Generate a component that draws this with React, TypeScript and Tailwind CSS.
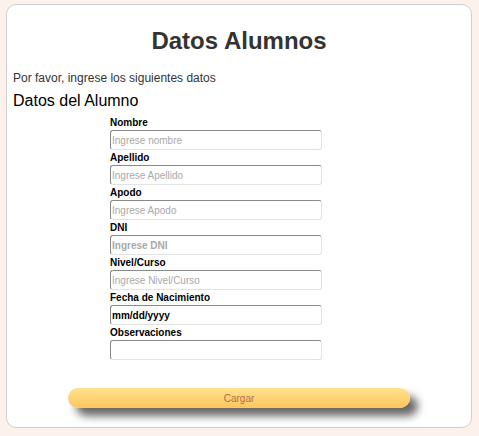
import React from "react";

const fields = [
  { label: "Nombre", placeholder: "Ingrese nombre" },
  { label: "Apellido", placeholder: "Ingrese Apellido" },
  { label: "Apodo", placeholder: "Ingrese Apodo" },
  { label: "DNI", placeholder: "Ingrese DNI", bold: true },
  { label: "Nivel/Curso", placeholder: "Ingrese Nivel/Curso" },
  { label: "Fecha de Nacimiento", value: "mm/dd/yyyy" },
  { label: "Observaciones", placeholder: "" },
];

export default function App() {
  return (
    <div
      className="min-h-[436px] bg-[#fdf1ec] px-[6px] pt-[4px] pb-[8px]"
      style={{ fontFamily: '"Liberation Sans", Arial, sans-serif' }}
    >
      <div className="w-[466px] h-[424px] bg-white border border-[#cfcfcf] rounded-[10px] px-[6px] flex flex-col">
        <h1 className="text-center text-[24px] leading-[30px] font-bold text-[#333] mt-[21px]">
          Datos Alumnos
        </h1>
        <p className="text-[12px] leading-[14px] text-[#333] mt-[15px]">
          Por favor, ingrese los siguientes datos
        </p>
        <h2 className="text-[16px] leading-[20px] text-black mt-[6px]">
          Datos del Alumno
        </h2>
        <form className="ml-[97px] w-[212px] flex flex-col mt-[4px]">
          {fields.map((f) => (
            <label key={f.label} className="flex flex-col">
              <span className="text-[10px] leading-[15px] font-bold text-black">
                {f.label}
              </span>
              <input
                className={`h-[20px] w-[212px] rounded-[3px] border border-t-[#8a8a8a] border-l-[#8a8a8a] border-r-[#e3e3e3] border-b-[#e3e3e3] px-[1px] text-[10px] text-black placeholder:text-[#a9a9a9] outline-none ${
                  f.bold || f.value ? "font-bold" : ""
                }`}
                placeholder={f.placeholder}
                defaultValue={f.value}
              />
            </label>
          ))}
        </form>
        <div className="flex justify-center mt-[28px]">
          <button className="w-[342px] h-[20px] rounded-full bg-gradient-to-b from-[#ffe28c] to-[#fdc55f] text-[10px] text-[#b86a45] shadow-[8px_8px_8px_rgba(0,0,0,0.6)]">
            Cargar
          </button>
        </div>
      </div>
    </div>
  );
}
